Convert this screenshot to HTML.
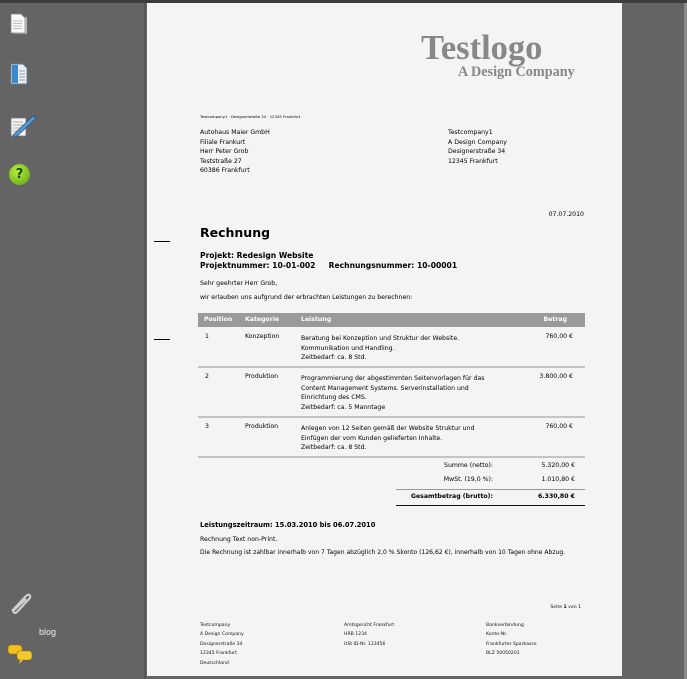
<!DOCTYPE html>
<html><head><meta charset="utf-8"><style>
*{margin:0;padding:0;box-sizing:border-box}
body{width:687px;height:679px;background:#646464;position:relative;overflow:hidden;font-family:"DejaVu Sans","Liberation Sans",sans-serif;color:#000}
.a{position:absolute;white-space:nowrap;line-height:1}
.s{font-size:6.2px}
.f{font-size:4.6px;color:#111}
.b{font-weight:bold}
.r{text-align:right}
.sep{position:absolute;left:198px;width:387px;height:2px;background:#c4c4c4}
</style></head><body>
<div style="position:absolute;left:0;top:0;width:687px;height:3px;background:#3c3c3c"></div>
<div style="position:absolute;left:144px;top:3px;width:2px;height:676px;background:#555"></div>
<div style="position:absolute;left:684px;top:3px;width:3px;height:676px;background:#8a8a8a"></div>
<div style="position:absolute;left:147px;top:3px;width:475px;height:673px;background:#f4f4f4"></div>

<!-- sidebar icons -->
<svg class="a" style="left:8px;top:12px" width="24" height="26"><rect x="6" y="5" width="13" height="17" fill="#d8d8d8" stroke="#777" stroke-width=".8"/><path d="M3 2h10l4 4v15H3z" fill="#fafafa" stroke="#888" stroke-width=".8"/><path d="M5 9h9M5 11.5h9M5 14h9M5 16.5h9" stroke="#aaa" stroke-width=".7"/></svg>
<svg class="a" style="left:8px;top:62px" width="24" height="26"><path d="M3 2h12l4 4v16H3z" fill="#e8eef4" stroke="#5a7a98" stroke-width=".9"/><rect x="4" y="3" width="6" height="18" fill="#3f88c8"/><path d="M11 9h6M11 12h6M11 15h6M11 18h6" stroke="#888" stroke-width=".8"/></svg>
<svg class="a" style="left:8px;top:112px" width="30" height="28"><rect x="3" y="6" width="15" height="18" fill="#f4f4f4" stroke="#777" stroke-width=".8"/><path d="M5 10h10M5 13h10M5 16h10M5 19h10" stroke="#999" stroke-width=".7"/><path d="M5 23L25 4l3 2.5L8 25z" fill="#5a9ad0" stroke="#1f4f80" stroke-width=".7"/></svg>
<div class="a" style="left:9px;top:164px;width:21px;height:21px;border-radius:50%;background:radial-gradient(circle at 40% 35%,#b8f040,#5aa010);color:#1a4a00;font:bold 13px 'DejaVu Sans';text-align:center;line-height:21px">?</div>
<svg class="a" style="left:7px;top:590px" width="26" height="26"><path d="M5 21L19 6c3-3 6 0 3 3L10 22c-2 2-5 0-3-2L19 9" fill="none" stroke="#cfcfcf" stroke-width="2.2"/></svg>
<div class="a" style="left:39px;top:628px;font-size:9px;color:#eee;font-family:'Liberation Sans',sans-serif">blog</div>
<svg class="a" style="left:7px;top:643px" width="28" height="22"><rect x="1" y="2" width="14" height="9" rx="3" fill="#f0c020" stroke="#a07000" stroke-width=".6"/><rect x="10" y="8" width="15" height="9" rx="3" fill="#f4c830" stroke="#a07000" stroke-width=".6"/><path d="M13 17l-1 4 4-4" fill="#f4c830"/></svg>

<!-- logo -->
<div class="a" style="left:421px;top:29px;font:bold 34.5px 'Liberation Serif',serif;color:#888">Testlogo</div>
<div class="a" style="left:458px;top:64px;font:bold 14.2px 'Liberation Serif',serif;color:#888">A Design Company</div>

<div class="a" style="left:200px;top:115px;font-size:3.8px">Testcompany1 · Designerstraße 34 · 12345 Frankfurt</div>
<div class="a s" style="left:200px;top:128px;line-height:9.5px">Autohaus Maier GmbH<br>Filiale Frankurt<br>Herr Peter Grob<br>Teststraße 27<br>60386 Frankfurt</div>
<div class="a s" style="left:448px;top:128px;line-height:9.5px">Testcompany1<br>A Design Company<br>Designerstraße 34<br>12345 Frankfurt</div>
<div class="a s" style="left:540px;top:212px;width:44px;text-align:right">07.07.2010</div>
<div class="a b" style="left:200px;top:227px;font-size:12.5px">Rechnung</div>
<div class="a" style="left:154px;top:241px;width:16px;height:1px;background:#000"></div>
<div class="a" style="left:154px;top:339px;width:16px;height:1px;background:#000"></div>
<div class="a b" style="left:200px;top:251px;font-size:7.6px;line-height:10px">Projekt: Redesign Website<br>Projektnummer: 10-01-002 &nbsp;&nbsp;&nbsp;&nbsp;Rechnungsnummer: 10-00001</div>
<div class="a s" style="left:200px;top:281px">Sehr geehrter Herr Grob,</div>
<div class="a s" style="left:200px;top:295px">wir erlauben uns aufgrund der erbrachten Leistungen zu berechnen:</div>

<div class="a" style="left:198px;top:313px;width:387px;height:14px;background:#9a9a9a"></div>
<div class="a s b" style="left:204px;top:317px;color:#fff">Position</div>
<div class="a s b" style="left:245px;top:317px;color:#fff">Kategorie</div>
<div class="a s b" style="left:301px;top:317px;color:#fff">Leistung</div>
<div class="a s b r" style="left:520px;top:317px;width:47px;color:#fff">Betrag</div>

<div class="a s" style="left:205px;top:334px">1</div>
<div class="a s" style="left:245px;top:334px">Konzeption</div>
<div class="a s" style="left:301px;top:334px;line-height:9.6px">Beratung bei Konzeption und Struktur der Website.<br>Kommunikation und Handling.</div>
<div class="a s" style="left:301px;top:355px">Zeitbedarf: ca. 8 Std.</div>
<div class="a s r" style="left:520px;top:334px;width:53px">760,00 €</div>
<div class="sep" style="top:366px"></div>

<div class="a s" style="left:205px;top:374px">2</div>
<div class="a s" style="left:245px;top:374px">Produktion</div>
<div class="a s" style="left:301px;top:374px;line-height:9.6px">Programmierung der abgestimmten Seitenvorlagen für das<br>Content Management Systems. Serverinstallation und<br>Einrichtung des CMS.</div>
<div class="a s" style="left:301px;top:405px">Zeitbedarf: ca. 5 Manntage</div>
<div class="a s r" style="left:520px;top:374px;width:53px">3.800,00 €</div>
<div class="sep" style="top:416px"></div>

<div class="a s" style="left:205px;top:424px">3</div>
<div class="a s" style="left:245px;top:424px">Produktion</div>
<div class="a s" style="left:301px;top:424px;line-height:9.6px">Anlegen von 12 Seiten gemäß der Website Struktur und<br>Einfügen der vom Kunden gelieferten Inhalte.</div>
<div class="a s" style="left:301px;top:445px">Zeitbedarf: ca. 8 Std.</div>
<div class="a s r" style="left:520px;top:424px;width:53px">760,00 €</div>
<div class="sep" style="top:456px"></div>

<div class="a s r" style="left:400px;top:463px;width:93px">Summe (netto):</div>
<div class="a s r" style="left:520px;top:463px;width:55px">5.320,00 €</div>
<div class="a s r" style="left:400px;top:477px;width:93px">MwSt. (19,0 %):</div>
<div class="a s r" style="left:520px;top:477px;width:55px">1.010,80 €</div>
<div class="a" style="left:396px;top:489px;width:189px;height:1px;background:#999"></div>
<div class="a s b r" style="left:380px;top:494px;width:113px">Gesamtbetrag (brutto):</div>
<div class="a s b r" style="left:520px;top:494px;width:55px">6.330,80 €</div>
<div class="a" style="left:396px;top:505px;width:189px;height:1px;background:#111"></div>

<div class="a s b" style="left:200px;top:522px;font-size:6.7px">Leistungszeitraum: 15.03.2010 bis 06.07.2010</div>
<div class="a s" style="left:200px;top:537px">Rechnung Text non-Print.</div>
<div class="a s" style="left:200px;top:550px;font-size:6.05px">Die Rechnung ist zahlbar innerhalb von 7 Tagen abzüglich 2,0 % Skonto (126,62 €), innerhalb von 10 Tagen ohne Abzug.</div>

<div class="a f r" style="left:520px;top:606px;width:61px">Seite <b>1</b> von 1</div>
<div class="a f" style="left:200px;top:621px;line-height:9.4px">Testcompany<br>A Design Company<br>Designerstraße 34<br>12345 Frankfurt<br>Deutschland</div>
<div class="a f" style="left:344px;top:621px;line-height:9.4px">Amtsgericht Frankfurt<br>HRB 1234<br>USt ID-Nr. 123456</div>
<div class="a f" style="left:486px;top:621px;line-height:9.4px">Bankverbindung<br>Konto-Nr.<br>Frankfurter Sparkasse<br>BLZ 50050201</div>
</body></html>
